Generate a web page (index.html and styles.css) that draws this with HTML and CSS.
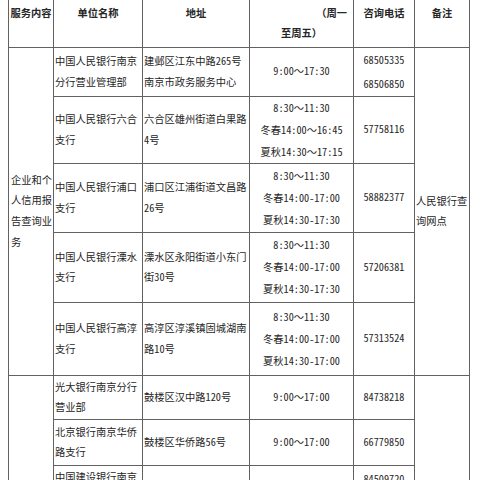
FILE: index.html
```html
<!DOCTYPE html>
<html lang="zh-CN">
<head>
<meta charset="utf-8">
<title>查询网点</title>
<link rel="stylesheet" href="styles.css">
</head>
<body>
<table class="sheet">
  <colgroup>
    <col class="c-svc"><col class="c-unit"><col class="c-addr"><col class="c-time"><col class="c-tel"><col class="c-note">
  </colgroup>
  <thead>
    <tr class="r-head">
      <th>服务内容</th>
      <th>单位名称</th>
      <th>地址</th>
      <th class="th-time"><div class="tr-line">（周一</div><div class="tc-line">至周五）</div></th>
      <th>咨询电话</th>
      <th>备注</th>
    </tr>
  </thead>
  <tbody>
    <tr class="r1">
      <td class="svc" rowspan="5">企业和个<br>人信用报<br>告查询业<br>务</td>
      <td class="txt">中国人民银行南京<br>分行营业管理部</td>
      <td class="txt">建邺区江东中路<span class="num">265</span>号<br>南京市政务服务中心</td>
      <td class="mid num">9:00～17:30</td>
      <td class="mid num"><div class="tel">68505335</div><div class="tel">68506850</div></td>
      <td class="note" rowspan="5">人民银行查<br>询网点</td>
    </tr>
    <tr class="r2">
      <td class="txt">中国人民银行六合<br>支行</td>
      <td class="txt">六合区雄州街道白果路<br><span class="num">4</span>号</td>
      <td class="mid"><div class="ln num">8:30～11:30</div><div class="ln">冬春<span class="num">14:00～16:45</span></div><div class="ln">夏秋<span class="num">14:30～17:15</span></div></td>
      <td class="mid num">57758116</td>
    </tr>
    <tr class="r3">
      <td class="txt">中国人民银行浦口<br>支行</td>
      <td class="txt">浦口区江浦街道文昌路<br><span class="num">26</span>号</td>
      <td class="mid"><div class="ln num">8:30～11:30</div><div class="ln">冬春<span class="num">14:00-17:00</span></div><div class="ln">夏秋<span class="num">14:30-17:30</span></div></td>
      <td class="mid num">58882377</td>
    </tr>
    <tr class="r4">
      <td class="txt">中国人民银行溧水<br>支行</td>
      <td class="txt">溧水区永阳街道小东门<br>街<span class="num">30</span>号</td>
      <td class="mid"><div class="ln num">8:30～11:30</div><div class="ln">冬春<span class="num">14:00-17:00</span></div><div class="ln">夏秋<span class="num">14:30-17:30</span></div></td>
      <td class="mid num">57206381</td>
    </tr>
    <tr class="r5">
      <td class="txt">中国人民银行高淳<br>支行</td>
      <td class="txt">高淳区淳溪镇固城湖南<br>路<span class="num">10</span>号</td>
      <td class="mid"><div class="ln num">8:30～11:30</div><div class="ln">冬春<span class="num">14:00-17:00</span></div><div class="ln">夏秋<span class="num">14:30-17:00</span></div></td>
      <td class="mid num">57313524</td>
    </tr>
    <tr class="r6">
      <td class="svc" rowspan="3"></td>
      <td class="txt">光大银行南京分行<br>营业部</td>
      <td class="txt">鼓楼区汉中路<span class="num">120</span>号</td>
      <td class="mid num">9:00～17:00</td>
      <td class="mid num">84738218</td>
      <td class="note" rowspan="3"></td>
    </tr>
    <tr class="r7">
      <td class="txt">北京银行南京华侨<br>路支行</td>
      <td class="txt">鼓楼区华侨路<span class="num">56</span>号</td>
      <td class="mid num">9:00～17:00</td>
      <td class="mid num">66779850</td>
    </tr>
    <tr class="r8">
      <td class="txt top8">中国建设银行南京<br>分行营业部</td>
      <td class="txt">玄武区中山路<span class="num">188</span>号</td>
      <td class="mid num">9:00～17:00</td>
      <td class="mid num top8"><div class="tel">84509720</div><div class="tel">84509721</div></td>
    </tr>
  </tbody>
</table>
</body>
</html>
```

FILE: styles.css
```css
html, body {
  margin: 0;
  padding: 0;
  background: #ffffff;
  overflow: hidden;
}

body {
  font-family: "Noto Sans CJK SC", "Noto Sans", sans-serif;
  font-size: 10.25px;
  color: #262626;
}

.sheet {
  margin-left: 8px;
  width: 461px;
  table-layout: fixed;
  border-collapse: collapse;
}

.c-svc { width: 45px; }
.c-unit { width: 89px; }
.c-addr { width: 107px; }
.c-time { width: 104px; }
.c-tel { width: 61px; }
.c-note { width: 55px; }

.sheet th,
.sheet td {
  border: 1px solid #626262;
  padding: 0 1px;
  line-height: 20.5px;
  overflow: hidden;
  white-space: nowrap;
}

.sheet th {
  border-top: none;
  font-weight: bold;
  vertical-align: top;
  text-align: center;
  padding-top: 3px;
  line-height: 20px;
}

.r-head { height: 47px; }
.r1 { height: 49px; }
.r2 { height: 65px; }
.r3 { height: 69px; }
.r4 { height: 70px; }
.r5 { height: 73px; }
.r6 { height: 44px; }
.r7 { height: 46px; }
.r8 { height: 72px; }

.th-time .tr-line {
  text-align: right;
  padding-right: 5px;
}

.th-time .tc-line {
  text-align: center;
}

.sheet .svc {
  vertical-align: middle;
  text-align: left;
  padding-left: 2px;
  padding-right: 0;
  line-height: 20.7px;
}

.sheet .note {
  vertical-align: middle;
  text-align: left;
  padding-left: 1px;
  padding-right: 0;
  line-height: 20px;
}

.txt {
  vertical-align: middle;
  text-align: left;
}

.mid {
  vertical-align: middle;
  text-align: center;
}

.sheet .top8 {
  vertical-align: top;
  padding-top: 1px;
}

.ln {
  line-height: 22px;
}

.tel {
  line-height: 24px;
}

.num {
  font-family: "Noto Sans Mono CJK SC", "Liberation Mono", monospace;
}

.ln:not(.num),
.txt,
.svc,
.note {
  font-family: "Noto Sans CJK SC", "Noto Sans", sans-serif;
}

.txt .num,
.ln .num {
  font-family: "Noto Sans Mono CJK SC", "Liberation Mono", monospace;
}
```
